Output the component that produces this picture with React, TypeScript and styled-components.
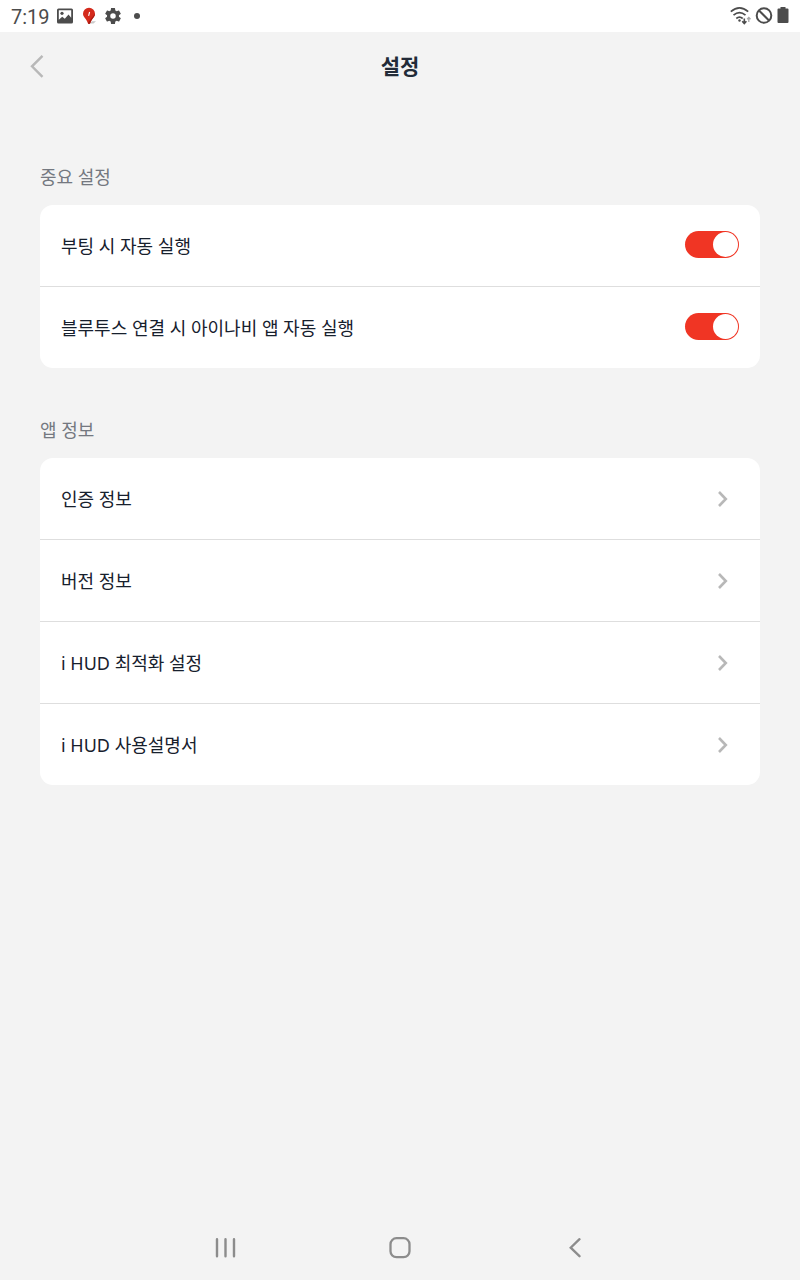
import React, { useState } from "react";
import styled, { createGlobalStyle } from "styled-components";

const GlobalStyle = createGlobalStyle`
  *, *::before, *::after { box-sizing: border-box; }
  body {
    margin: 0;
    background: #f3f3f3;
    font-family: "Noto Sans", "Noto Sans CJK KR", sans-serif;
  }
  button, input { font: inherit; margin: 0; }
`;

const Screen = styled.div`
  display: flex;
  flex-direction: column;
  min-height: 100vh;
`;

const StatusBar = styled.div`
  display: flex;
  align-items: center;
  justify-content: space-between;
  height: 32px;
  padding: 0 11px 1px 11px;
  background: #ffffff;
  color: #4c4c4c;
`;

const StatusGroup = styled.div<{ $gap: number }>`
  display: flex;
  align-items: center;
  gap: ${({ $gap }) => $gap}px;

  svg { display: block; }
`;

const Clock = styled.time`
  font-family: Roboto, sans-serif;
  font-size: 20px;
  line-height: 30px;
  padding-top: 3px;
`;

const Header = styled.header`
  display: grid;
  grid-template-columns: 44px 1fr 44px;
  align-items: center;
  height: 69px;
  padding: 0 15px 1px;
`;

const Title = styled.h1`
  margin: 0;
  font-size: 21px;
  line-height: 32px;
  font-weight: 700;
  text-align: center;
  color: #222b38;
`;

const IconButton = styled.button`
  display: flex;
  align-items: center;
  justify-content: center;
  width: 44px;
  height: 44px;
  padding: 0;
  border: 0;
  background: none;
  color: #8c8c8c;
  cursor: pointer;
`;

const Main = styled.main`
  display: flex;
  flex: 1;
  flex-direction: column;
  gap: 48px;
  padding: 62px 40px 40px;
`;

const SectionTitle = styled.h2`
  margin: 0 0 14px;
  font-size: 18px;
  line-height: 28px;
  font-weight: 400;
  color: #747880;
`;

const List = styled.ul`
  margin: 0;
  padding: 0;
  list-style: none;
  overflow: hidden;
  border-radius: 13px;
  background: #ffffff;
`;

const Item = styled.li`
  & + & { border-top: 1px solid #dedede; }
`;

const SwitchRow = styled.label`
  display: flex;
  align-items: center;
  justify-content: space-between;
  height: 81px;
  padding: 0 21px;
  font-size: 18px;
  line-height: 28px;
  color: #17202d;
  cursor: pointer;
`;

const LinkRow = styled.a`
  display: flex;
  align-items: center;
  justify-content: space-between;
  height: 81px;
  padding: 0 29px 0 21px;
  font-size: 18px;
  line-height: 28px;
  color: #17202d;
  text-decoration: none;
`;

const Switch = styled.input`
  appearance: none;
  display: flex;
  flex-shrink: 0;
  width: 54px;
  height: 27px;
  padding: 1px;
  border-radius: 14px;
  background: #c4c4c4;
  cursor: pointer;

  && { margin-bottom: 2px; }

  &::before {
    content: "";
    width: 25px;
    height: 25px;
    border-radius: 50%;
    background: #ffffff;
  }
  &:checked {
    justify-content: flex-end;
    background: #f03524;
  }
`;

const NavBar = styled.nav`
  display: flex;
  align-items: center;
  justify-content: center;
  gap: 131px;
  height: 65px;
`;

function Toggle({ label }: { label: string }) {
  const [on, setOn] = useState(true);
  return (
    <Item>
      <SwitchRow>
        {label}
        <Switch
          type="checkbox"
          role="switch"
          checked={on}
          onChange={(e) => setOn(e.target.checked)}
        />
      </SwitchRow>
    </Item>
  );
}

function Link({ label, href }: { label: string; href: string }) {
  return (
    <Item>
      <LinkRow href={href}>
        {label}
        <svg width="16" height="18" viewBox="0 0 16 18" fill="none" aria-hidden="true">
          <path d="M4 2 10.800 9 4 16" stroke="#b8b8b8" strokeWidth="2.600" />
        </svg>
      </LinkRow>
    </Item>
  );
}

function PictureIcon() {
  return (
    <svg width="16" height="16" viewBox="0 0 16 16" aria-hidden="true">
      <path
        fill="#4c4c4c"
        fillRule="evenodd"
        d="M1.500.5h13A1.500 1.500 0 0 1 16 2v12a1.500 1.500 0 0 1-1.500 1.500h-13A1.500 1.500 0 0 1 0 14V2A1.500 1.500 0 0 1 1.500.5ZM1.800 2.300v9.400l3.400-3 2.600 2.100 3.700-4.300 2.700 3.300V2.300Z"
      />
      <circle cx="5" cy="5.300" r="1.600" fill="#4c4c4c" />
    </svg>
  );
}

function PinIcon() {
  return (
    <svg width="16" height="18" viewBox="-2 0 16 18" aria-hidden="true">
      <path d="M7 16.500 10 14.200l4 .1-2.500 2.100Z" fill="#c9c9c9" />
      <path
        d="M7 .7a6 6 0 0 1 6 6c0 3.300-3.400 5-4.700 9.200Q7 18 5.800 15.900C4.500 11.700 1 10 1 6.700a6 6 0 0 1 6-6Z"
        fill="#d42a1c"
      />
      <path d="M13 6.700c0 3.300-3.400 5-4.700 9.200Q7 18 5.800 15.900 9.500 11 13 6.700Z" fill="#a81b12" />
      <path d="m7.600 5-1 3.800" stroke="#ffffff" strokeWidth="1.100" />
    </svg>
  );
}

function GearIcon() {
  return (
    <svg width="20" height="20" viewBox="0 0 24 24" fill="#4c4c4c" aria-hidden="true">
      <path d="M19.140 12.940c.04-.3.060-.61.060-.94 0-.32-.02-.64-.07-.94l2.030-1.580a.49.49 0 0 0 .12-.61l-1.920-3.320a.488.488 0 0 0-.59-.22l-2.390.96c-.5-.38-1.030-.7-1.620-.94l-.36-2.540a.484.484 0 0 0-.48-.41h-3.840c-.24 0-.43.17-.47.41l-.36 2.540c-.59.24-1.130.57-1.620.94l-2.390-.96c-.22-.08-.47 0-.59.22L2.740 8.870c-.12.21-.08.47.12.61l2.030 1.580c-.05.3-.09.63-.09.94s.02.64.07.94l-2.030 1.580a.49.49 0 0 0-.12.61l1.920 3.320c.12.22.37.29.59.22l2.390-.96c.5.38 1.030.7 1.620.94l.36 2.540c.05.24.24.41.48.41h3.840c.24 0 .44-.17.47-.41l.36-2.540c.59-.24 1.130-.56 1.620-.94l2.390.96c.22.08.47 0 .59-.22l1.920-3.320c.12-.22.07-.47-.12-.61l-2.010-1.580ZM12 15.300A3.300 3.300 0 1 1 12 8.700a3.300 3.300 0 0 1 0 6.600Z" />
    </svg>
  );
}

function WifiIcon() {
  return (
    <svg width="22" height="18" viewBox="-1 0 22 18" fill="none" aria-hidden="true">
      <g stroke="#4c4c4c" strokeWidth="1.700">
        <path d="M.8 4.700q8.700-7.600 17.400 0" />
        <path d="M3.500 8.200q6-5.200 12 0" />
        <path d="M6.300 11.500q3.200-2.800 6.400 0" />
      </g>
      <circle cx="9.500" cy="13.500" r="1.200" fill="#4c4c4c" />
      <path d="M14.300 11.500v4.800m-2.100-2 2.100 2.200 2.100-2.200" stroke="#4c4c4c" strokeWidth="1.600" />
      <path d="M18.800 15V10.500m-1.700 1.800 1.700-1.800 1.700 1.800" stroke="#a6a6a6" strokeWidth="1.300" />
    </svg>
  );
}

function BlockedIcon() {
  return (
    <svg width="18" height="18" viewBox="0 0 18 18" fill="none" stroke="#4c4c4c" strokeWidth="2" aria-hidden="true">
      <circle cx="9" cy="8.500" r="7.300" />
      <path d="m4 3.500 10 10" />
    </svg>
  );
}

function BatteryIcon() {
  return (
    <svg width="12" height="18" viewBox="0 0 12 18" fill="#4c4c4c" aria-hidden="true">
      <path d="M3.500 0h5v1.500h2a1 1 0 0 1 1 1v12.500a1 1 0 0 1-1 1h-9a1 1 0 0 1-1-1V2.500a1 1 0 0 1 1-1h2Z" />
    </svg>
  );
}

export default function App() {
  return (
    <>
      <GlobalStyle />
      <Screen>
        <StatusBar>
          <StatusGroup $gap={7}>
            <Clock>7:19</Clock>
            <PictureIcon />
            <PinIcon />
            <GearIcon />
            <svg width="14" height="8" viewBox="0 0 14 8" aria-hidden="true">
              <circle cx="7" cy="4" r="3" fill="#4c4c4c" />
            </svg>
          </StatusGroup>
          <StatusGroup $gap={4}>
            <WifiIcon />
            <BlockedIcon />
            <BatteryIcon />
          </StatusGroup>
        </StatusBar>

        <Header>
          <IconButton type="button" aria-label="뒤로">
            <svg width="16" height="24" viewBox="0 0 16 24" fill="none" aria-hidden="true">
              <path d="M13.500 1.800 3 12.300l10.500 10.500" stroke="#b8b8b8" strokeWidth="2.400" />
            </svg>
          </IconButton>
          <Title>설정</Title>
        </Header>

        <Main>
          <section>
            <SectionTitle>중요 설정</SectionTitle>
            <List>
              <Toggle label="부팅 시 자동 실행" />
              <Toggle label="블루투스 연결 시 아이나비 앱 자동 실행" />
            </List>
          </section>
          <section>
            <SectionTitle>앱 정보</SectionTitle>
            <List>
              <Link label="인증 정보" href="#certification" />
              <Link label="버전 정보" href="#version" />
              <Link label="i HUD 최적화 설정" href="#optimize" />
              <Link label="i HUD 사용설명서" href="#manual" />
            </List>
          </section>
        </Main>

        <NavBar>
          <IconButton type="button" aria-label="최근 앱">
            <svg width="22" height="20" viewBox="0 0 22 20" fill="none" aria-hidden="true">
              <path d="M3 1.200v17M11.500 1.200v17M20 1.200v17" stroke="currentColor" strokeWidth="2.400" strokeLinecap="round" />
            </svg>
          </IconButton>
          <IconButton type="button" aria-label="홈">
            <svg width="22" height="22" viewBox="0 0 22 22" fill="none" aria-hidden="true">
              <rect x="1.500" y="1.200" width="19" height="19" rx="6" stroke="currentColor" strokeWidth="2.300" />
            </svg>
          </IconButton>
          <IconButton type="button" aria-label="이전">
            <svg width="14" height="20" viewBox="0 0 14 20" fill="none" aria-hidden="true">
              <path d="M11.500 1.200 2.700 9.700l8.800 8.500" stroke="currentColor" strokeWidth="2.300" strokeLinecap="round" />
            </svg>
          </IconButton>
        </NavBar>
      </Screen>
    </>
  );
}
